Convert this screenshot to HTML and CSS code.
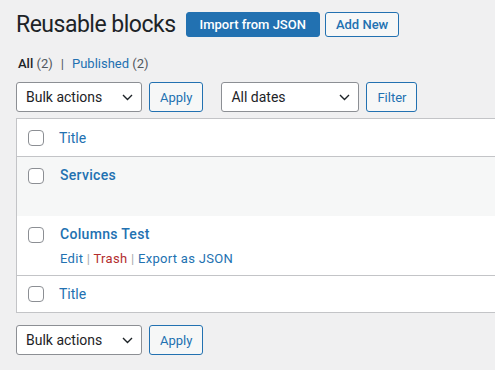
FILE: index.html
```html
<!DOCTYPE html>
<html>
	<head>
		<meta charset="UTF-8">
		<title>Reusable blocks</title>
		<link rel="stylesheet" href="styles.css">
	</head>
	<body>
		<div class="wrap">
			<div class="page-head">
				<h1>Reusable blocks</h1>
				<a href="#" class="btn primary">Import from JSON</a>
				<a href="#" class="btn outline">Add New</a>
			</div>

			<ul class="subsub">
				<li><b>All</b> <span class="count">(2)</span></li>
				<li class="sep">|</li>
				<li><a href="#">Published</a> <span class="count">(2)</span></li>
			</ul>

			<div class="tablenav">
				<div class="select bulk">Bulk actions
					<svg width="11" height="7" viewBox="0 0 11 7"><path d="M1 1l4.5 4.5L10 1" fill="none" stroke="#1d2327" stroke-width="1.4"/></svg>
				</div>
				<button class="btn outline small">Apply</button>
				<div class="select dates">All dates
					<svg width="11" height="7" viewBox="0 0 11 7"><path d="M1 1l4.5 4.5L10 1" fill="none" stroke="#1d2327" stroke-width="1.4"/></svg>
				</div>
				<button class="btn outline small">Filter</button>
			</div>

			<div class="list">
				<div class="row head">
					<span class="cb"></span>
					<a href="#" class="col-title">Title</a>
				</div>
				<div class="row item alt">
					<span class="cb"></span>
					<div class="cell">
						<a href="#" class="row-title">Services</a>
					</div>
				</div>
				<div class="row item">
					<span class="cb"></span>
					<div class="cell">
						<a href="#" class="row-title">Columns Test</a>
						<div class="actions">
							<a href="#">Edit</a> <span class="bar">|</span>
							<a href="#" class="trash">Trash</a> <span class="bar">|</span>
							<a href="#">Export as JSON</a>
						</div>
					</div>
				</div>
				<div class="row foot">
					<span class="cb"></span>
					<a href="#" class="col-title">Title</a>
				</div>
			</div>

			<div class="tablenav bottom">
				<div class="select bulk">Bulk actions
					<svg width="11" height="7" viewBox="0 0 11 7"><path d="M1 1l4.5 4.5L10 1" fill="none" stroke="#1d2327" stroke-width="1.4"/></svg>
				</div>
				<button class="btn outline small">Apply</button>
			</div>
		</div>
	</body>
</html>
```

FILE: styles.css
```css
*{
	margin:0;
	padding:0;
	box-sizing:border-box;
}
html,body{
	overflow:hidden;
}
body{
	background:#f0f0f1;
	color:#1d2327;
	font-family:Roboto, "Noto Sans", sans-serif;
	font-size:13px;
}
a{
	color:#2271b1;
	text-decoration:none;
}
.wrap{
	width:620px;
	padding-left:16px;
}
.page-head{
	display:flex;
	align-items:center;
	height:48px;
	padding-top:1px;
}
.page-head h1{
	font-size:23px;
	font-weight:400;
	letter-spacing:-0.5px;
	margin-right:10px;
}
.btn{
	display:inline-flex;
	align-items:center;
	justify-content:center;
	height:25px;
	padding:0 11px;
	border-radius:3px;
	font-family:inherit;
	font-size:13px;
	font-weight:500;
	margin-right:5px;
}
.btn.primary{
	background:#2271b1;
	border:1px solid #2271b1;
	color:#fff;
	padding:0 13px;
}
.btn.outline{
	background:#f6f7f7;
	border:1px solid #2271b1;
	color:#2271b1;
	padding:0 10px;
}
.btn.small{
	height:30px;
	font-weight:400;
	margin-right:0;
}
ul.subsub{
	list-style:none;
	display:flex;
	gap:5px;
	margin-top:7px;
	padding-left:2px;
	color:#50575e;
	line-height:18px;
}
ul.subsub b{
	color:#1d2327;
	font-weight:500;
}
ul.subsub .sep{
	margin:0 3px;
}
.tablenav{
	display:flex;
	align-items:center;
	gap:7px;
	margin-top:9px;
	height:30px;
}
.tablenav.bottom{
	margin-top:12px;
}
.select{
	display:flex;
	align-items:center;
	justify-content:space-between;
	height:30px;
	padding:0 8px 0 9px;
	background:#fff;
	border:1px solid #8c8f94;
	border-radius:3px;
	font-size:14px;
}
.select.bulk{
	width:126px;
}
.select.dates{
	width:138px;
	margin-left:11px;
}
.list{
	margin-top:6px;
	background:#fff;
	border:1px solid #c3c4c7;
	border-right:none;
}
.row{
	display:flex;
	align-items:flex-start;
}
.row.head{
	height:38px;
	align-items:center;
	border-bottom:1px solid #c3c4c7;
}
.row.foot{
	height:37px;
	align-items:center;
	border-top:1px solid #c3c4c7;
}
.row.item{
	height:59px;
	padding-top:9px;
}
.row.alt{
	background:#f6f7f7;
}
.cb{
	display:block;
	width:16px;
	height:16px;
	margin:0 15px 0 11px;
	border:1px solid #8c8f94;
	border-radius:4px;
	background:#fff;
	flex:none;
}
.row.item .cb{
	margin-top:2px;
}
.col-title{
	font-size:14px;
}
.cell{
	padding-left:1px;
}
.row-title{
	font-size:14px;
	font-weight:500;
	letter-spacing:0.3px;
	line-height:18px;
}
.actions{
	margin-top:7px;
	line-height:18px;
	letter-spacing:0.3px;
}
.actions .bar{
	color:#a7aaad;
}
.actions .trash{
	color:#b32d2e;
}
```
